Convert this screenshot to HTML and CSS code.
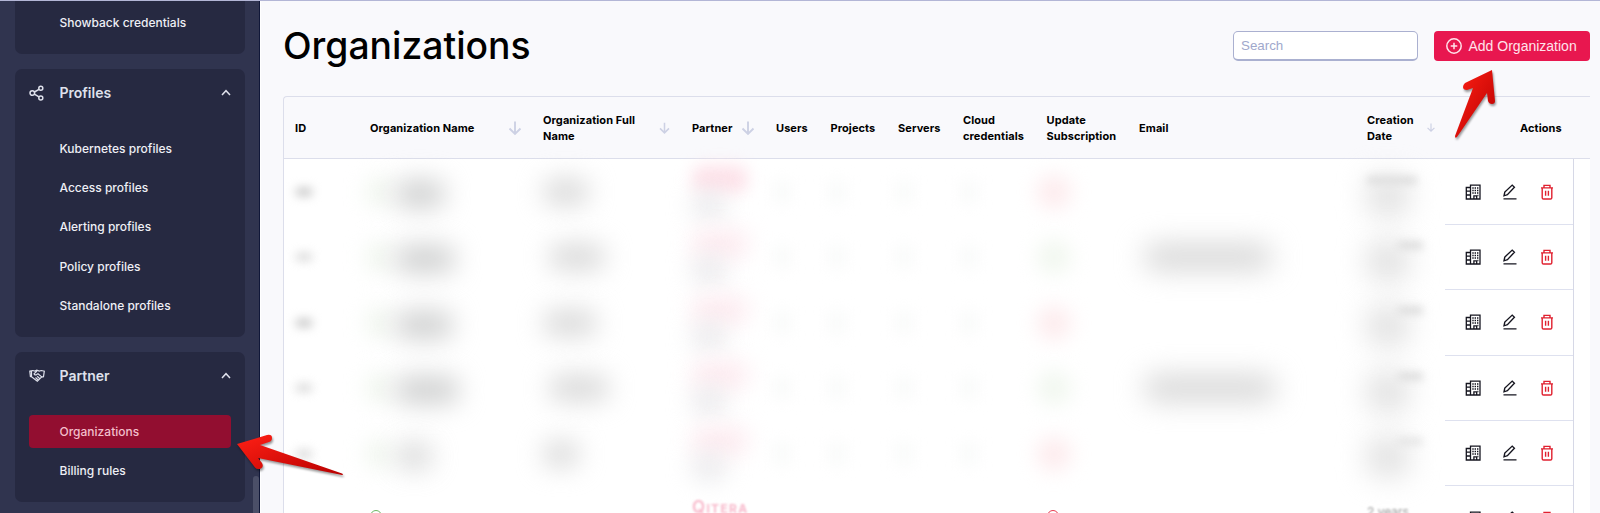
FILE: index.html
```html
<!DOCTYPE html>
<html lang="en">
<head>
<meta charset="utf-8">
<title>Organizations</title>
<link rel="stylesheet" href="styles.css">
</head>
<body>
<svg class="defs" width="0" height="0">
  <defs>
    <linearGradient id="red" x1="0" y1="0" x2="1" y2="1"><stop offset="0" stop-color="#ff2015"/><stop offset="1" stop-color="#b80000"/></linearGradient>
    <symbol id="down" viewBox="0 0 16 16"><path d="M8 1.500v12.500M2.500 8.500L8 14l5.500-5.500" fill="none" stroke="currentColor" stroke-width="1.900"/></symbol>
    <symbol id="up" viewBox="0 0 10 7"><path d="M1 6l4-4.300 4 4.300" fill="none" stroke="currentColor" stroke-width="1.500"/></symbol>
    <symbol id="building" viewBox="0 0 16 16"><path d="M5.500 15V1.200h9.500v13.800zM5.500 3.500H1.300v11.500h4.200M1.300 7.200h4M1.300 11h4M8.900 15v-3.200h2.800v3.200" fill="none" stroke="currentColor" stroke-width="1.300"/><path d="M7.300 4h1.400M9.600 4h1.400M12 4h1.400M7.300 6.500h1.400M9.600 6.500h1.400M12 6.500h1.400M7.300 9h1.400M9.600 9h1.400M12 9h1.400M12.400 11.500h1" stroke="currentColor" stroke-width="1.400"/></symbol>
    <symbol id="pen" viewBox="0 0 16 16"><path d="M2 11.800l.8-3.800 7.400-6.900 2.200 2.200-7 7.400zM1.500 14.900h13" fill="none" stroke="currentColor" stroke-width="1.400"/></symbol>
    <symbol id="trash" viewBox="0 0 16 16"><path d="M2 3.900h12M5 3.700V1.400h6v2.300M3.200 4v9.700q0 1.300 1.300 1.300h7q1.300 0 1.300-1.300V4M6.600 6.800v5M9.400 6.800v5" fill="none" stroke="currentColor" stroke-width="1.400"/></symbol>
  </defs>
</svg>
<div class="app">
  <aside class="sidebar">
    <section class="card card-first"><a class="item">Showback credentials</a></section>
    <section class="card">
      <h2 class="group">
        <svg class="group-icon" width="16" height="16" viewBox="0 0 16 16" fill="none" stroke="currentColor" stroke-width="1.500"><circle cx="3.300" cy="8" r="2.300"/><circle cx="11.800" cy="3.200" r="2"/><circle cx="11.800" cy="13" r="2"/><path d="M5.400 7L10 4.300M5.400 9.200l4.600 2.700"/></svg>
        <span>Profiles</span><svg class="chevron" width="10" height="7"><use href="#up"/></svg>
      </h2>
      <a class="item">Kubernetes profiles</a><a class="item">Access profiles</a><a class="item">Alerting profiles</a><a class="item">Policy profiles</a><a class="item">Standalone profiles</a>
    </section>
    <section class="card card-partner">
      <h2 class="group">
        <svg class="group-icon" width="16" height="14" viewBox="0 0 16 14" fill="none" stroke="currentColor" stroke-width="1.200"><path d="M.8 2.200l3-.7 2 .5 2-.9 2.500.9 2-.5 3 .7-.8 5.500-2 .4-4.200 4.200L2.900 8l-1.500-.4zM8 2L5 4.800q.7 1.700 2.700.8L9 4.700l4 3.400M8.200 7.300l2.600 2.500M6.500 8.500l2.700 2.500M2.500 2v5.500"/></svg>
        <span>Partner</span><svg class="chevron" width="10" height="7"><use href="#up"/></svg>
      </h2>
      <a class="item active">Organizations</a><a class="item">Billing rules</a>
    </section>
    <div class="scroll-thumb"></div>
  </aside>
  <main class="main">
    <header class="top">
      <h1>Organizations</h1>
      <input class="search" placeholder="Search">
      <button class="add"><svg width="16" height="16" viewBox="0 0 16 16" fill="none" stroke="currentColor" stroke-width="1.500"><circle cx="8" cy="8" r="7.200"/><path d="M8 4.700v6.600M4.700 8h6.600"/></svg>Add Organization</button>
    </header>
    <div class="table">
      <div class="row head">
        <div>ID</div>
        <div class="sort">Organization Name<svg width="16" height="16"><use href="#down"/></svg></div>
        <div class="sort full"><span>Organization Full Name</span><svg width="13" height="14"><use href="#down"/></svg></div>
        <div class="sort partner">Partner<svg width="16" height="16"><use href="#down"/></svg></div>
        <div>Users</div><div>Projects</div><div>Servers</div><div>Cloud<br>credentials</div><div>Update<br>Subscription</div><div>Email</div>
        <div class="sort date"><span>Creation Date</span><svg width="10" height="11"><use href="#down"/></svg></div>
        <div class="head-actions">Actions</div>
      </div>
      <div class="rows">
        <div class="row">
          <div><i class="blur id"></i></div><div><i class="blur dot"></i><i class="blur ink" style="width:50px"></i></div><div><i class="blur soft" style="width:46px"></i></div><div class="stack"><i class="blur pink clear"></i><i class="blur grey"></i></div><div><i class="blur num"></i></div><div><i class="blur num"></i></div><div><i class="blur num"></i></div><div><i class="blur num"></i></div><div><i class="blur flag off"></i></div><div></div><div class="stack"><i class="blur line" style="width:50px"></i><i class="blur date-fog"></i></div>
          <div class="actions"><svg><use href="#building"/></svg><svg><use href="#pen"/></svg><svg class="del"><use href="#trash"/></svg></div>
        </div>
        <div class="row">
          <div><i class="blur id faint"></i></div><div><i class="blur dot"></i><i class="blur ink" style="width:60px"></i></div><div><i class="blur soft shifted" style="width:56px"></i></div><div class="stack"><i class="blur pink"></i><i class="blur grey"></i></div><div><i class="blur num"></i></div><div><i class="blur num"></i></div><div><i class="blur num"></i></div><div><i class="blur num"></i></div><div><i class="blur flag on"></i></div><div><i class="blur mail" style="width:128px"></i></div><div class="stack"><i class="blur line late"></i><i class="blur date-fog"></i></div>
          <div class="actions"><svg><use href="#building"/></svg><svg><use href="#pen"/></svg><svg class="del"><use href="#trash"/></svg></div>
        </div>
        <div class="row">
          <div><i class="blur id"></i></div><div><i class="blur dot"></i><i class="blur ink" style="width:58px"></i></div><div><i class="blur soft" style="width:54px"></i></div><div class="stack"><i class="blur pink"></i><i class="blur grey"></i></div><div><i class="blur num"></i></div><div><i class="blur num"></i></div><div><i class="blur num"></i></div><div><i class="blur num"></i></div><div><i class="blur flag off"></i></div><div></div><div class="stack"><i class="blur line late"></i><i class="blur date-fog"></i></div>
          <div class="actions"><svg><use href="#building"/></svg><svg><use href="#pen"/></svg><svg class="del"><use href="#trash"/></svg></div>
        </div>
        <div class="row">
          <div><i class="blur id faint"></i></div><div><i class="blur dot"></i><i class="blur ink" style="width:64px"></i></div><div><i class="blur soft shifted" style="width:60px"></i></div><div class="stack"><i class="blur pink"></i><i class="blur grey"></i></div><div><i class="blur num"></i></div><div><i class="blur num"></i></div><div><i class="blur num"></i></div><div><i class="blur num"></i></div><div><i class="blur flag on"></i></div><div><i class="blur mail" style="width:132px"></i></div><div class="stack"><i class="blur line late"></i><i class="blur date-fog"></i></div>
          <div class="actions"><svg><use href="#building"/></svg><svg><use href="#pen"/></svg><svg class="del"><use href="#trash"/></svg></div>
        </div>
        <div class="row">
          <div><i class="blur id faint"></i></div><div><i class="blur dot"></i><i class="blur ink pale" style="width:38px"></i></div><div><i class="blur soft" style="width:36px"></i></div><div class="stack"><i class="blur pink"></i><i class="blur grey"></i></div><div><i class="blur num"></i></div><div><i class="blur num"></i></div><div><i class="blur num"></i></div><div><i class="blur num"></i></div><div><i class="blur flag off"></i></div><div></div><div class="stack"><i class="blur line faint late"></i><i class="blur date-fog"></i></div>
          <div class="actions"><svg><use href="#building"/></svg><svg><use href="#pen"/></svg><svg class="del"><use href="#trash"/></svg></div>
        </div>
        <div class="row last">
          <div></div><div><b class="ring green"></b></div><div></div><div class="owner"><span><big>Q</big>ITERA</span></div><div></div><div></div><div></div><div></div><div><b class="ring crimson"></b></div><div></div><div class="age">2 years</div>
          <div class="actions"><svg><use href="#building"/></svg><svg><use href="#pen"/></svg><svg class="del"><use href="#trash"/></svg></div>
        </div>
      </div>
    </div>
  </main>
</div>
<svg class="pointer pointer-left" width="112" height="44" viewBox="0 0 112 44"><path d="M1 11L31 2q5-1 5 3 0 3-3 4l-9 3 82 28.500q2 1 0 1.500L22 25l4 5q2 4-1 5.500-4 1.500-6-1z" fill="url(#red)"/></svg>
<svg class="pointer pointer-top" width="48" height="76" viewBox="0 0 48 76"><path d="M41 2l3 31q0 3-3 3t-4-3l-1-8L6 69q-2 2-2-1L22 20l-6 2q-4 0-4-3 0-2 2-4z" fill="url(#red)"/></svg>
</body>
</html>
```
FILE: styles.css
```css
* { box-sizing: border-box; }
body { margin: 0; height: 513px; overflow: hidden; position: relative; font-family: Inter, "Liberation Sans", sans-serif; background: #f9f9fc; }
.defs { position: absolute; }
.app { display: flex; height: 513px; overflow: hidden; border-top: 1px solid #b3b6d6; }

.sidebar { position: relative; flex: none; width: 260px; padding: 0 14px 0 15px; background: #30344f; border-right: 1px solid #101738; overflow: hidden; }
.card { width: 230px; height: 268px; margin-bottom: 15px; padding: 5px 14px 0; background: #262941; border-radius: 7px; }
.card-first { height: 53px; border-radius: 0 0 7px 7px; }
.card-partner { height: 150px; }
.group { display: flex; align-items: center; height: 37px; margin: 0 0 20.500px; font-size: 14px; font-weight: 600; color: #dfe1ec; }
.group-icon { width: 16px; margin-right: 14.500px; }
.group span { flex: 1; }
.chevron { color: #dfe1ec; }
.item { display: flex; align-items: center; height: 33px; margin-bottom: 6.400px; padding-left: 30.500px; border-radius: 4px; font-size: 12px; font-weight: 550; color: #eeeff5; }
.item.active { color: #f3bfcb; background: #920e30; }
.scroll-thumb { position: absolute; right: 0; bottom: 0; width: 6px; height: 37px; border-radius: 3px 3px 0 0; background: #4b4f68; }

.main { flex: 1; padding: 0 10px 0 22px; border-left: 1px solid #fff; }
.top { display: flex; align-items: center; height: 89px; margin-bottom: 6px; }
h1 { flex: 1; margin: 0; padding-top: 1px; font-size: 37.300px; font-weight: 450; line-height: 46px; color: #000; }
.search { width: 185px; height: 30px; padding: 0 7px; border: 1px solid #aab0d0; border-bottom-width: 2px; border-radius: 5px; background: #fff; font: 13.333px "Liberation Sans", sans-serif; }
.search::placeholder { color: #a0a8cc; opacity: 1; }
.add { display: flex; align-items: center; gap: 7px; width: 156.500px; height: 30px; margin-left: 15.500px; padding: 0 0 0 12px; border: 0; border-radius: 4px; background: #e8174f; color: #ffe3eb; font: 14px "Liberation Sans", sans-serif; white-space: nowrap; }
.add svg { flex: none; }

.table { height: 418px; overflow: hidden; border: 1px solid #dcdeeb; border-width: 1px 0 0 1px; border-radius: 4px 0 0 0; }
.row { display: grid; grid-template-columns: 75px 173px 149px 84px 54.500px 67.500px 65px 83.500px 92.500px 228px 78px 1fr; height: 65.400px; padding-left: 11px; }
.row > div { display: flex; align-items: center; min-width: 0; }
.row.head { height: 62px; border-bottom: 1px solid #dcdeeb; font-size: 11px; font-weight: 700; line-height: 16px; letter-spacing: .08px; color: #000; }
.sort { gap: 33px; }
.sort svg { flex: none; color: #cdd1e4; }
.sort.full { gap: 19px; }
.sort.full span { width: 96px; }
.sort.partner { gap: 7px; }
.sort.date { gap: 9px; }
.sort.date span { width: 50px; }
.row .head-actions { padding-left: 75px; }

.rows { padding-top: .4px; background: #fff; }
.rows .row { width: 1290px; border-right: 1px solid #d6d8e6; }
.row .actions { gap: 21px; padding-left: 20px; border-bottom: 1px solid #dee1ef; color: #15151f; }
.actions svg { flex: none; width: 16px; height: 16px; }
.actions .del { color: #e0202f; }
.blur { flex: none; display: block; border-radius: 12px; }
.id { width: 18px; height: 10px; background: #d0d0d0; filter: blur(5px); }
.faint { opacity: .65; }
.dot { width: 20px; height: 28px; margin-left: -2px; background: #edf4ea; filter: blur(11px); }
.ink { height: 28px; margin: 4px 0 0 7px; background: #d0d1d1; filter: blur(13px); }
.pale { opacity: .75; }
.soft { height: 26px; background: #d9d9d9; filter: blur(13px); }
.shifted { margin-left: 6px; }
.row > .stack { flex-direction: column; align-items: flex-start; justify-content: center; }
.pink { width: 56px; height: 28px; margin-top: -2px; background: #fdebf0; filter: blur(11px); }
.pink.clear { background: #fde3ea; filter: blur(8px); }
.grey { width: 34px; height: 24px; background: #e7e7ea; filter: blur(12px); }
.num { width: 12px; height: 24px; background: #f6f8f7; filter: blur(8px); }
.flag { width: 34px; height: 34px; margin-left: -10px; border-radius: 50%; background: #fdebed; filter: blur(10px); }
.flag.on { background: #f1f7ef; }
.mail { height: 26px; margin-left: 5px; background: #d7d7d7; filter: blur(14px); }
.line { width: 40px; height: 7px; margin-top: 8px; background: #d6d6d6; filter: blur(4px); }
.line.late { width: 26px; margin-left: 30px; }
.date-fog { width: 42px; height: 40px; margin-top: -8px; background: #e2e2e2; filter: blur(14px); }
.rows .last > div { align-items: flex-start; }
.rows .last > .actions { align-items: center; }
.ring { width: 12px; height: 12px; margin-top: 24px; border-radius: 50%; border: 1px solid #6db564; }
.ring.crimson { border-color: #e83b50; }
.row > .owner { padding-top: 11px; font-size: 12px; font-weight: 700; line-height: 20px; letter-spacing: 1.300px; color: #f8b9cb; filter: blur(1px); }
.owner big { font-size: 17px; font-weight: 600; }
.row > .age { padding-top: 18px; font-size: 12px; line-height: 15px; color: #999; filter: blur(.8px); }

.pointer { position: absolute; filter: drop-shadow(1px 2px 1px rgba(0, 0, 0, .4)); }
.pointer-left { left: 236px; top: 433px; }
.pointer-top { left: 1451px; top: 68px; }
```
